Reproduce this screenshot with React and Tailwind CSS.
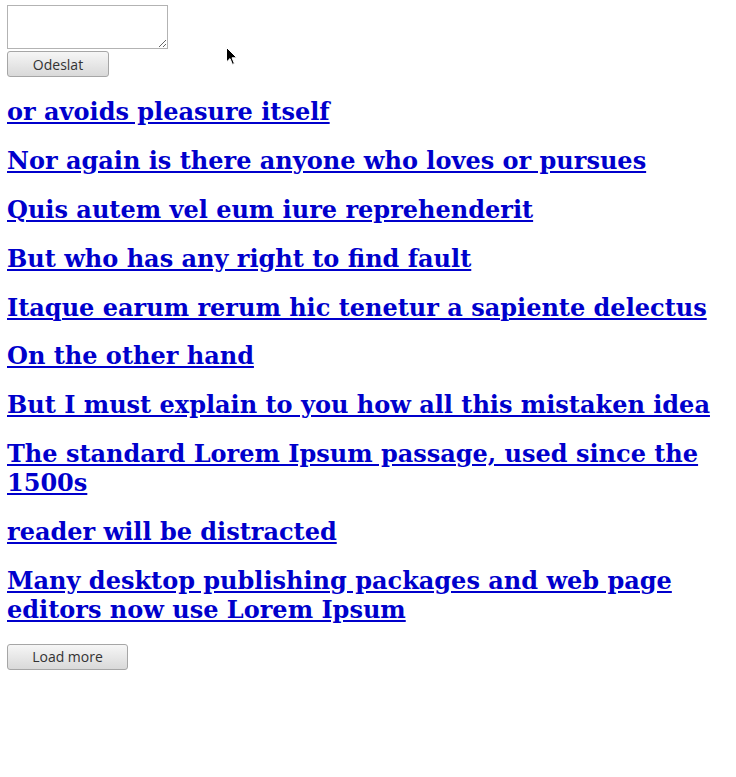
import React from 'react'

const titles = [
  'or avoids pleasure itself',
  'Nor again is there anyone who loves or pursues',
  'Quis autem vel eum iure reprehenderit',
  'But who has any right to find fault',
  'Itaque earum rerum hic tenetur a sapiente delectus',
  'On the other hand',
  'But I must explain to you how all this mistaken idea',
  'The standard Lorem Ipsum passage, used since the 1500s',
  'reader will be distracted',
  'Many desktop publishing packages and web page editors now use Lorem Ipsum',
]

function Btn({ children, className = '' }) {
  return (
    <button
      className={`block h-[26px] rounded-[3px] border border-[#a6a6a6] bg-gradient-to-b from-[#f6f6f6] to-[#d9d9d9] text-[14px] text-[#333] font-['Open_Sans',sans-serif] ${className}`}
    >
      {children}
    </button>
  )
}

export default function App() {
  return (
    <div className="relative min-h-[777px] bg-white pl-[7px] pr-[8px] pt-[5px]">
      {/* form */}
      <textarea className="block h-[44px] w-[161px] border border-[#b3b3b3] bg-white" />
      <Btn className="mt-[2px] w-[102px]">Odeslat</Btn>

      {/* list */}
      <div className="pt-[0.4px] font-['DejaVu_Serif',serif]">
        {titles.map((t) => (
          <h2 key={t} className="my-[19.85px] text-[24px] font-bold leading-[29px]">
            <a href="#" className="text-[#0000cc] underline">
              {t}
            </a>
          </h2>
        ))}
      </div>

      <Btn className="w-[121px]">Load more</Btn>

      {/* mouse cursor */}
      <svg
        className="absolute left-[226px] top-[47px]"
        width="12"
        height="19"
        viewBox="0 0 12 19"
      >
        <path
          d="M0.5 0.5 L0.5 15 L4 11.6 L6.4 17.4 L8.4 16.5 L6 10.8 L10.8 10.8 Z"
          fill="#000"
          stroke="#fff"
          strokeWidth="1"
        />
      </svg>
    </div>
  )
}
